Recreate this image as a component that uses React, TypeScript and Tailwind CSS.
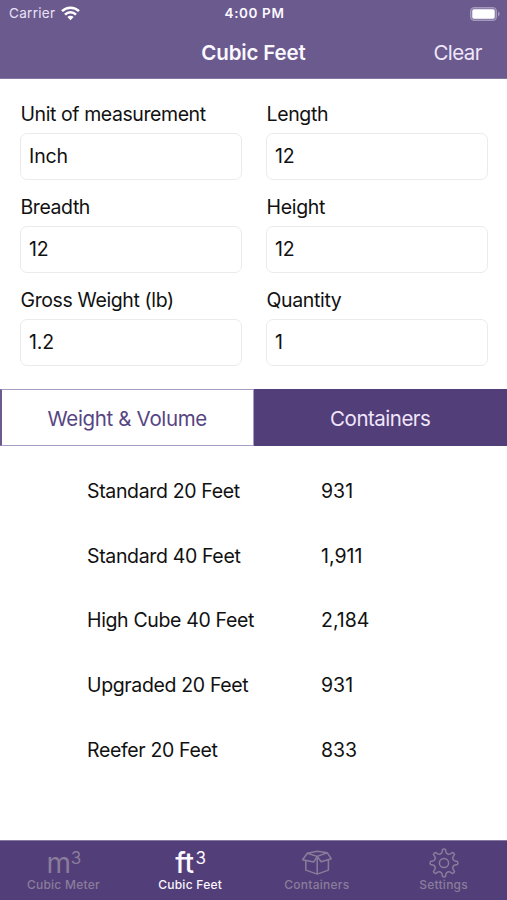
import clsx from "clsx";
import type { ReactNode } from "react";

const fields = [
  { label: "Unit of measurement", value: "Inch", labelSpacing: "tracking-[-0.42px]" },
  { label: "Length", value: "12", labelSpacing: "tracking-[-0.35px]" },
  { label: "Breadth", value: "12", labelSpacing: "tracking-[-0.42px]" },
  { label: "Height", value: "12", labelSpacing: "tracking-[-0.3px]" },
  { label: "Gross Weight (lb)", value: "1.2", labelSpacing: "tracking-[-0.38px]" },
  { label: "Quantity", value: "1", labelSpacing: "tracking-[-0.35px]" },
];

const containers = [
  { name: "Standard 20 Feet", count: "931" },
  { name: "Standard 40 Feet", count: "1,911" },
  { name: "High Cube 40 Feet", count: "2,184" },
  { name: "Upgraded 20 Feet", count: "931" },
  { name: "Reefer 20 Feet", count: "833" },
];

function StatusBar() {
  return (
    <div className="grid h-[27px] grid-cols-[1fr_auto_1fr] items-center pl-[9px] pr-[7px] text-[13.5px] leading-none">
      <div className="flex items-center gap-[6px] text-[#e9e2f7]">
        <span className="pt-px tracking-[0.3px]">Carrier</span>
        <svg width="19" height="15" viewBox="0 0 19 15" fill="none" stroke="#fff" strokeWidth="2.5">
          <path d="M1 5.2a12.2 12.2 0 0 1 17 0" />
          <path d="M4 8.6a7.8 7.8 0 0 1 11 0" />
          <path d="M9.5 14.3 6.4 11.1a4.4 4.4 0 0 1 6.2 0Z" fill="#fff" stroke="none" />
        </svg>
      </div>
      <div className="pt-px text-center font-semibold tracking-[0.6px]">4:00 PM</div>
      <div className="flex justify-end">
        <svg width="30" height="14" viewBox="0 0 30 14">
          <rect x="0.5" y="0.5" width="26" height="13" rx="3.5" fill="#8c7faa" stroke="#a398bd" />
          <rect x="2.3" y="2.3" width="22.4" height="9.4" rx="1.8" fill="#fff" />
          <path d="M28 4.6c2.2 1 2.2 3.8 0 4.8Z" fill="#a398bd" />
        </svg>
      </div>
    </div>
  );
}

function Header() {
  return (
    <header className="h-[79px] border-b border-[#8276a0] bg-[#6b5a8e] text-[#fbf8ff]">
      <StatusBar />
      <div className="grid h-[52px] grid-cols-[1fr_auto_1fr] items-center px-[25px]">
        <h1 className="col-start-2 text-[20.5px] font-semibold tracking-[-0.15px]">Cubic Feet</h1>
        <button className="justify-self-end text-[20.5px] tracking-[-0.55px] text-[#efe8fb]">Clear</button>
      </div>
    </header>
  );
}

function Field({ label, value, labelSpacing }: { label: string; value: string; labelSpacing: string }) {
  return (
    <label className="block h-[93px]">
      <span className={clsx("block h-[32px] pl-[0.5px] leading-[26px]", labelSpacing)}>{label}</span>
      <span className="flex h-[47px] items-center rounded-[7px] border border-[#ebebeb] px-2 tracking-[-0.1px]">{value}</span>
    </label>
  );
}

// Outline of an eight-toothed gear centred on (15, 15)
function gearPath() {
  const point = (r: number, deg: number) => {
    const a = (deg * Math.PI) / 180;
    return `${(15 + r * Math.sin(a)).toFixed(2)} ${(15 - r * Math.cos(a)).toFixed(2)}`;
  };
  let d = `M${point(13.6, -6)}`;
  for (let i = 0; i < 8; i++) {
    const a = i * 45;
    d += `Q${point(14.3, a)} ${point(13.6, a + 6)}`;
    d += `L${point(11.2, a + 10)}`;
    d += `C${point(9.4, a + 16)} ${point(9.4, a + 29)} ${point(11.2, a + 35)}`;
    d += `L${point(13.6, a + 39)}`;
  }
  return d + "Z";
}

function GearIcon() {
  return (
    <svg width="30" height="30" viewBox="0 0 30 30" fill="none" stroke="currentColor" strokeWidth="1.5" strokeLinejoin="round">
      <path d={gearPath()} />
      <circle cx="15" cy="15" r="4.6" />
    </svg>
  );
}

function BoxIcon() {
  return (
    <svg width="32" height="26" viewBox="0 0 32 26" fill="none" stroke="currentColor" strokeWidth="1.5" strokeLinejoin="round">
      <path d="M6.3 3.2 16.2 6.4 12.6 12.1 1.6 9.7Z" />
      <path d="M26.3 2.8 16.2 6.4 20.2 11.8 30.3 8.8Z" />
      <path d="M6.3 3.2 16.2 1.2 26.3 2.8" />
      <path d="M4.8 10.6v9.5l11.4 4 11.2-4v-10" />
      <path d="M16.2 6.4v17.7" />
    </svg>
  );
}

function TabItem({ icon, label, active }: { icon: ReactNode; label: string; active?: boolean }) {
  return (
    <button className={clsx("flex flex-col items-center", active ? "text-[#fbf6ff]" : "text-[#8a7d9b]")}>
      <span className="flex h-[37px] items-center justify-center pt-[7px]">{icon}</span>
      <span className="text-[12px] font-medium leading-[14px] tracking-[0.25px]">{label}</span>
    </button>
  );
}

function UnitIcon({ unit, className }: { unit: string; className?: string }) {
  return (
    <span className={clsx("flex items-start pl-px leading-none", className)}>
      <span className="text-[28px] leading-[28px] tracking-[-0.5px]">{unit}</span>
      <span className="pt-px text-[17px] font-normal leading-[17px]">3</span>
    </span>
  );
}

export default function App() {
  return (
    <div className="flex h-[900px] w-[507px] flex-col bg-white font-['Inter',sans-serif] text-[19.5px] text-[#111]">
      <Header />

      <div className="grid grid-cols-2 gap-x-[24px] pl-[20px] pr-[19px] pt-[22px]">
        {fields.map((field) => (
          <Field key={field.label} {...field} />
        ))}
      </div>

      <div className="mt-[9px] grid h-[57px] grid-cols-2 text-[20.5px] tracking-[-0.35px]">
        <button className="border border-l-2 border-[#a79dc0] border-l-[#6b5a8e] pt-[3px] text-[#574582]">
          Weight &amp; Volume
        </button>
        <button className="bg-[#523e78] pt-[3px] tracking-[-0.5px] text-[#f0e6fc]">Containers</button>
      </div>

      <div className="flex-1 pt-[13px]">
        {containers.map((item) => (
          <div key={item.name} className="grid h-[64.75px] grid-cols-[234px_1fr] items-center pl-[87px]">
            <span className="tracking-[-0.35px]">{item.name}</span>
            <span>{item.count}</span>
          </div>
        ))}
      </div>

      <nav className="grid h-[60px] grid-cols-4 border-t border-[#8478a0] bg-[#523e78]">
        <TabItem icon={<UnitIcon unit="m" />} label="Cubic Meter" />
        <TabItem icon={<UnitIcon unit="ft" className="gap-[2px] font-medium" />} label="Cubic Feet" active />
        <TabItem icon={<BoxIcon />} label="Containers" />
        <TabItem icon={<GearIcon />} label="Settings" />
      </nav>
    </div>
  );
}
